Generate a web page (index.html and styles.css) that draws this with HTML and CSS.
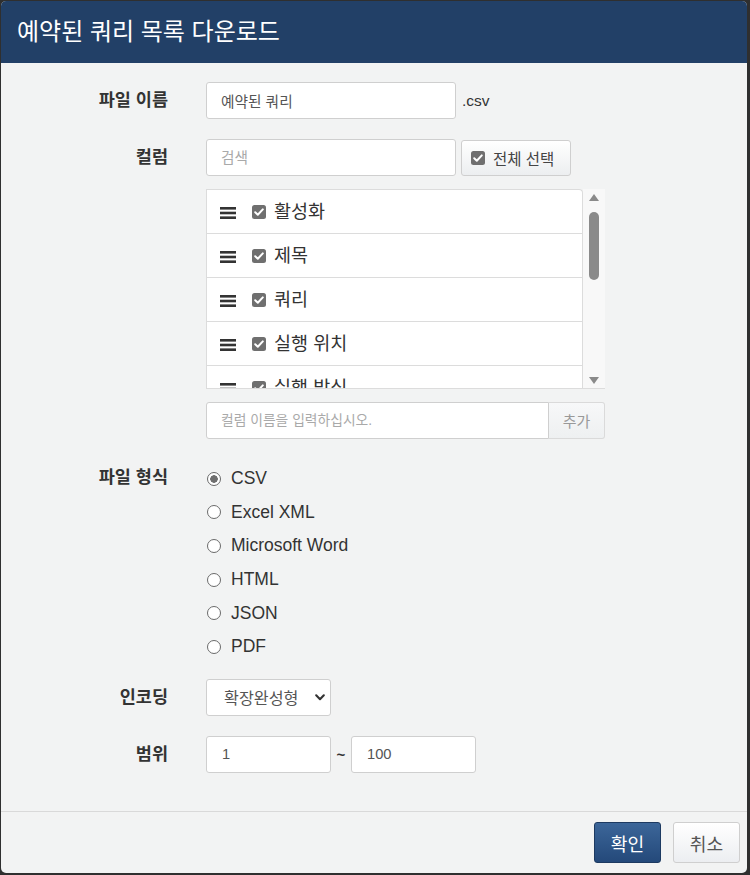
FILE: index.html
```html
<!DOCTYPE html>
<html lang="ko">
<head>
<meta charset="utf-8">
<title>예약된 쿼리 목록 다운로드</title>
<link rel="stylesheet" href="styles.css">
</head>
<body>
<div class="dialog">
  <div class="header"><h1 class="title">예약된 쿼리 목록 다운로드</h1></div>
  <div class="body">
    <div class="row">
      <div class="lbl">파일 이름</div>
      <div class="ctl line">
        <input class="text w250" type="text" value="예약된 쿼리">
        <span class="ext">.csv</span>
      </div>
    </div>
    <div class="row">
      <div class="lbl">컬럼</div>
      <div class="ctl stack">
        <div class="line">
          <input class="text w250" type="text" placeholder="검색">
          <button class="btn btn-all" type="button">
            <svg class="chk" viewBox="0 0 14 14" width="14" height="14"><rect x="0" y="0" width="14" height="14" rx="2.5" fill="#6f6f6f"/><path d="M3.2 7.3 L5.8 9.8 L10.8 4.4" fill="none" stroke="#fff" stroke-width="2" stroke-linecap="round" stroke-linejoin="round"/></svg>
            전체 선택
          </button>
        </div>
        <div class="listbox">
          <ul class="list">
            <li class="item"><svg class="grip" viewBox="0 0 16 12" width="16" height="12"><rect x="0" y="0" width="16" height="2.6" fill="#333"/><rect x="0" y="4.7" width="16" height="2.6" fill="#333"/><rect x="0" y="9.4" width="16" height="2.6" fill="#333"/></svg><svg class="chk" viewBox="0 0 14 14" width="14" height="14"><rect x="0" y="0" width="14" height="14" rx="2.5" fill="#6f6f6f"/><path d="M3.2 7.3 L5.8 9.8 L10.8 4.4" fill="none" stroke="#fff" stroke-width="2" stroke-linecap="round" stroke-linejoin="round"/></svg><span class="iname">활성화</span></li>
            <li class="item"><svg class="grip" viewBox="0 0 16 12" width="16" height="12"><rect x="0" y="0" width="16" height="2.6" fill="#333"/><rect x="0" y="4.7" width="16" height="2.6" fill="#333"/><rect x="0" y="9.4" width="16" height="2.6" fill="#333"/></svg><svg class="chk" viewBox="0 0 14 14" width="14" height="14"><rect x="0" y="0" width="14" height="14" rx="2.5" fill="#6f6f6f"/><path d="M3.2 7.3 L5.8 9.8 L10.8 4.4" fill="none" stroke="#fff" stroke-width="2" stroke-linecap="round" stroke-linejoin="round"/></svg><span class="iname">제목</span></li>
            <li class="item"><svg class="grip" viewBox="0 0 16 12" width="16" height="12"><rect x="0" y="0" width="16" height="2.6" fill="#333"/><rect x="0" y="4.7" width="16" height="2.6" fill="#333"/><rect x="0" y="9.4" width="16" height="2.6" fill="#333"/></svg><svg class="chk" viewBox="0 0 14 14" width="14" height="14"><rect x="0" y="0" width="14" height="14" rx="2.5" fill="#6f6f6f"/><path d="M3.2 7.3 L5.8 9.8 L10.8 4.4" fill="none" stroke="#fff" stroke-width="2" stroke-linecap="round" stroke-linejoin="round"/></svg><span class="iname">쿼리</span></li>
            <li class="item"><svg class="grip" viewBox="0 0 16 12" width="16" height="12"><rect x="0" y="0" width="16" height="2.6" fill="#333"/><rect x="0" y="4.7" width="16" height="2.6" fill="#333"/><rect x="0" y="9.4" width="16" height="2.6" fill="#333"/></svg><svg class="chk" viewBox="0 0 14 14" width="14" height="14"><rect x="0" y="0" width="14" height="14" rx="2.5" fill="#6f6f6f"/><path d="M3.2 7.3 L5.8 9.8 L10.8 4.4" fill="none" stroke="#fff" stroke-width="2" stroke-linecap="round" stroke-linejoin="round"/></svg><span class="iname">실행 위치</span></li>
            <li class="item"><svg class="grip" viewBox="0 0 16 12" width="16" height="12"><rect x="0" y="0" width="16" height="2.6" fill="#333"/><rect x="0" y="4.7" width="16" height="2.6" fill="#333"/><rect x="0" y="9.4" width="16" height="2.6" fill="#333"/></svg><svg class="chk" viewBox="0 0 14 14" width="14" height="14"><rect x="0" y="0" width="14" height="14" rx="2.5" fill="#6f6f6f"/><path d="M3.2 7.3 L5.8 9.8 L10.8 4.4" fill="none" stroke="#fff" stroke-width="2" stroke-linecap="round" stroke-linejoin="round"/></svg><span class="iname">실행 방식</span></li>
          </ul>
          <div class="sbar">
            <svg class="sarrow" viewBox="0 0 10 7" width="10" height="7"><path d="M0 7 L5 0 L10 7 Z" fill="#8a8a8a"/></svg>
            <div class="strack"><div class="sthumb"></div></div>
            <svg class="sarrow" viewBox="0 0 10 7" width="10" height="7"><path d="M0 0 L5 7 L10 0 Z" fill="#8a8a8a"/></svg>
          </div>
        </div>
        <div class="line">
          <input class="text add-input" type="text" placeholder="컬럼 이름을 입력하십시오.">
          <button class="btn btn-add" type="button">추가</button>
        </div>
      </div>
    </div>
    <div class="row row-radio">
      <div class="lbl lbl-radio">파일 형식</div>
      <div class="ctl radios">
        <div class="radio"><span class="rdot on"></span>CSV</div>
        <div class="radio"><span class="rdot"></span>Excel XML</div>
        <div class="radio"><span class="rdot"></span>Microsoft Word</div>
        <div class="radio"><span class="rdot"></span>HTML</div>
        <div class="radio"><span class="rdot"></span>JSON</div>
        <div class="radio"><span class="rdot"></span>PDF</div>
      </div>
    </div>
    <div class="row row-enc">
      <div class="lbl">인코딩</div>
      <div class="ctl line">
        <div class="select">
          <span class="sel-text">확장완성형</span>
          <svg class="chev" viewBox="0 0 10 7" width="10" height="7"><path d="M1.2 1.3 L5 5.2 L8.8 1.3" fill="none" stroke="#333" stroke-width="2.1" stroke-linecap="round" stroke-linejoin="round"/></svg>
        </div>
      </div>
    </div>
    <div class="row">
      <div class="lbl">범위</div>
      <div class="ctl line">
        <input class="text w125" type="text" value="1">
        <span class="tilde">~</span>
        <input class="text w125" type="text" value="100">
      </div>
    </div>
  </div>
  <div class="footer">
    <button class="fbtn primary" type="button">확인</button>
    <button class="fbtn" type="button">취소</button>
  </div>
</div>
</body>
</html>
```
FILE: styles.css
```css
html, body {
  margin: 0;
  padding: 0;
  background: #2f2f2f;
}
body {
  font-family: "Liberation Sans", "Noto Sans CJK KR", sans-serif;
  color: #333;
  padding: 1px 0 0 1px;
  height: 874px;
  box-sizing: border-box;
}
.dialog {
  width: 746px;
  height: 872px;
  background: #f2f3f3;
  border-radius: 5px;
  overflow: hidden;
  display: flex;
  flex-direction: column;
}
.header {
  background: #224067;
  height: 62px;
  display: flex;
  align-items: center;
  padding-left: 16px;
  flex: none;
}
.title {
  margin: 0;
  color: #fff;
  font-size: 24px;
  font-weight: 400;
  line-height: 30px;
  font-family: "Liberation Sans", "Noto Sans CJK KR", sans-serif;
}
.body {
  flex: 1;
  padding-top: 19px;
  display: flex;
  flex-direction: column;
  gap: 20px;
}
.row {
  display: grid;
  grid-template-columns: 167px 1fr;
  column-gap: 38px;
  align-items: start;
}
.lbl {
  text-align: right;
  font-weight: 700;
  font-size: 17.5px;
  line-height: 37px;
  color: #333;
}
.line {
  display: flex;
  align-items: center;
}
.stack {
  display: flex;
  flex-direction: column;
  gap: 13px;
}
.text {
  box-sizing: border-box;
  height: 37px;
  border: 1px solid #cfcfcf;
  border-radius: 3px;
  background: #fff;
  padding: 0 14px;
  font-family: "Liberation Sans", "Noto Sans CJK KR", sans-serif;
  font-size: 14.7px;
  color: #555;
  outline: none;
}
.text::placeholder {
  color: #a9a9a9;
}
.w250 { width: 250px; }
.w125 { width: 125px; padding-left: 15px; }
.ext {
  margin-left: 6px;
  font-size: 15.5px;
  color: #333;
}
.btn {
  font-family: "Liberation Sans", "Noto Sans CJK KR", sans-serif;
  box-sizing: border-box;
  border: 1px solid #cfcfcf;
  background: linear-gradient(#ffffff, #eceef0);
  cursor: pointer;
}
.btn-all {
  margin-left: 5px;
  width: 110px;
  height: 36px;
  border-radius: 3px;
  display: flex;
  align-items: center;
  justify-content: flex-start;
  gap: 8px;
  padding: 0 0 0 9px;
  font-size: 15.5px;
  color: #444;
}
.chk { flex: none; display: block; }
.listbox {
  width: 399px;
  height: 200px;
  box-sizing: border-box;
  display: flex;
  border-left: 1px solid #dcdcdc;
  border-bottom: 1px solid #dcdcdc;
  overflow: hidden;
}
.list {
  list-style: none;
  margin: 0;
  padding: 0;
  width: 376px;
  flex: none;
  border-top: 1px solid #dcdcdc;
  border-right: 1px solid #dcdcdc;
  border-top-right-radius: 4px;
  background: #fff;
  overflow: hidden;
  box-sizing: border-box;
}
.item {
  height: 43px;
  border-bottom: 1px solid #dcdcdc;
  display: flex;
  align-items: center;
  padding-left: 13px;
  flex: none;
}
.grip {
  display: block;
  margin-top: 3px;
  margin-right: 16px;
  flex: none;
}
.item .chk { margin-right: 8px; }
.iname {
  font-size: 18.5px;
  color: #333;
  line-height: 24px;
}
.sbar {
  flex: 1;
  background: #f8f8f8;
  display: flex;
  flex-direction: column;
  align-items: center;
  padding: 5px 0 4px;
}
.sarrow { display: block; flex: none; }
.strack {
  flex: 1;
  width: 100%;
  display: flex;
  justify-content: center;
  padding-top: 11px;
}
.sthumb {
  width: 10px;
  height: 68px;
  border-radius: 5px;
  background: #8a8a8a;
}
.add-input {
  width: 343px;
  border-radius: 3px 0 0 3px;
  font-size: 13.8px;
}
.btn-add {
  width: 56px;
  height: 37px;
  border-left: none;
  border-radius: 0 3px 3px 0;
  border-color: #dadada;
  background: linear-gradient(#f7f8f9, #eef0f1);
  color: #999;
  font-size: 15px;
}
.row-radio {
  margin-top: 3px;
}
.lbl-radio {
  line-height: 30px;
}
.radios {
  display: flex;
  flex-direction: column;
}
.radio {
  height: 33.6px;
  display: flex;
  align-items: center;
  font-size: 17.5px;
  color: #333;
  padding-left: 1px;
}
.rdot {
  box-sizing: border-box;
  width: 14px;
  height: 14px;
  border-radius: 50%;
  border: 1px solid #6a6a6a;
  background: #fff;
  margin-right: 10px;
  flex: none;
}
.rdot.on {
  background: radial-gradient(circle, #6f6f6f 0 3.5px, #fff 4px);
}
.row-enc { margin-top: -5px; }
.select {
  box-sizing: border-box;
  width: 125px;
  height: 37px;
  border: 1px solid #cfcfcf;
  border-radius: 3px;
  background: #fff;
  display: flex;
  align-items: center;
  justify-content: space-between;
  padding: 0 5px 0 17px;
}
.sel-text {
  font-size: 16.2px;
  color: #555;
}
.chev { display: block; }
.tilde {
  width: 20px;
  text-align: center;
  font-weight: 700;
  font-size: 15px;
  color: #333;
}
.footer {
  flex: none;
  height: 62px;
  box-sizing: border-box;
  border-top: 1px solid #d9d9d9;
  display: flex;
  justify-content: flex-end;
  align-items: flex-start;
  gap: 12px;
  padding: 10px 7px 0 0;
}
.fbtn {
  width: 67px;
  height: 41px;
  box-sizing: border-box;
  border-radius: 3px;
  border: 1px solid #cfcfcf;
  background: linear-gradient(#ffffff, #eceef1);
  font-family: "Liberation Sans", "Noto Sans CJK KR", sans-serif;
  font-size: 18.2px;
  color: #555;
  padding: 0;
  cursor: pointer;
}
.fbtn.primary {
  border-color: #1d3a61;
  background: linear-gradient(#3c6699, #24497a);
  color: #fff;
}
```
